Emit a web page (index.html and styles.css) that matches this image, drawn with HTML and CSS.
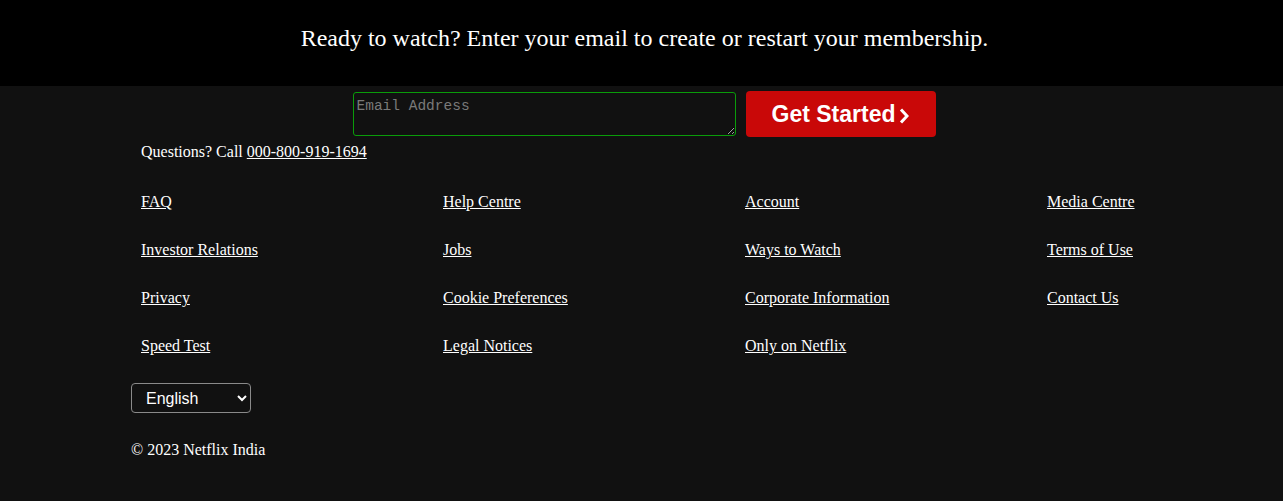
FILE: index.html
```html
<!DOCTYPE html>
<html lang="en">
<head>
<meta charset="utf-8">
<title>Netflix footer</title>
<link rel="stylesheet" href="styles.css">
</head>
<body>
<header class="cta">
  <h3 class="cta-title">Ready to watch? Enter your email to create or restart your membership.</h3>
</header>
<main class="footer">
  <form class="signup">
    <textarea class="email" placeholder="Email Address"></textarea>
    <button type="button" class="start">Get Started<svg class="chev" viewBox="0 0 10 16" width="10" height="16"><path d="M2 1.5 L8 8 L2 14.5" fill="none" stroke="#fff" stroke-width="3"/></svg></button>
  </form>
  <p class="questions">Questions? Call <a href="#">000-800-919-1694</a></p>
  <ul class="links">
    <li><a href="#">FAQ</a></li>
    <li><a href="#">Help Centre</a></li>
    <li><a href="#">Account</a></li>
    <li><a href="#">Media Centre</a></li>
    <li><a href="#">Investor Relations</a></li>
    <li><a href="#">Jobs</a></li>
    <li><a href="#">Ways to Watch</a></li>
    <li><a href="#">Terms of Use</a></li>
    <li><a href="#">Privacy</a></li>
    <li><a href="#">Cookie Preferences</a></li>
    <li><a href="#">Corporate Information</a></li>
    <li><a href="#">Contact Us</a></li>
    <li><a href="#">Speed Test</a></li>
    <li><a href="#">Legal Notices</a></li>
    <li><a href="#">Only on Netflix</a></li>
  </ul>
  <div class="lang">
    <select class="lang-select">
      <option>English</option>
      <option>हिन्दी</option>
    </select>
  </div>
  <p class="copy">© 2023 Netflix India</p>
</main>
</body>
</html>
```
FILE: styles.css
```css
html, body {
  margin: 0;
  padding: 0;
  background: #111111;
  color: #fff;
  font-family: "Liberation Serif", "Times New Roman", serif;
  overflow: hidden;
}
.cta {
  background: #000;
  height: 86px;
  display: flex;
  justify-content: center;
  align-items: flex-start;
  padding-left: 6px;
}
.cta-title {
  margin: 24px 0 0;
  font-weight: normal;
  font-size: 24px;
  line-height: 28px;
}
.footer {
  padding: 0 0 0 131px;
}
.signup {
  display: flex;
  justify-content: center;
  align-items: flex-start;
  gap: 10px;
  margin: 5px 0 0 -131px;
  padding-left: 5px;
}
.email {
  box-sizing: border-box;
  width: 383px;
  height: 44px;
  margin-top: 1px;
  background: #111;
  border: 1px solid #0a9c0a;
  border-radius: 3px;
  color: #fff;
  padding: 5px 3px 3px;
  font-family: "Liberation Mono", monospace;
  font-size: 14.5px;
  line-height: 16px;
  outline: none;
}
.email::placeholder {
  color: #7a7a7a;
}
.start {
  box-sizing: border-box;
  width: 190px;
  height: 46px;
  background: #c90808;
  border: none;
  border-radius: 4px;
  color: #fff;
  font-family: "Liberation Sans", Arial, sans-serif;
  font-weight: bold;
  font-size: 23px;
  display: flex;
  align-items: center;
  justify-content: center;
  gap: 4px;
  padding: 1px 0 0;
}
.chev {
  display: block;
  margin-top: 2px;
}
.questions {
  margin: 5px 0 0 10px;
  font-size: 16px;
  line-height: 19px;
}
a {
  color: #fff;
}
.links {
  list-style: none;
  margin: 31px 0 0;
  padding: 0 0 0 10px;
  display: grid;
  grid-template-columns: repeat(3, 302px) auto;
  row-gap: 29px;
  font-size: 16px;
  line-height: 19px;
}
.lang {
  margin-top: 28px;
}
.lang-select {
  width: 120px;
  height: 30px;
  background: #111;
  color: #fff;
  border: 1px solid #8a8a8a;
  border-radius: 4px;
  font-family: "Liberation Sans", Arial, sans-serif;
  font-size: 16px;
  padding: 0 10px;
}
.copy {
  margin: 27px 0 0;
  font-size: 16px;
  line-height: 19px;
}
```
